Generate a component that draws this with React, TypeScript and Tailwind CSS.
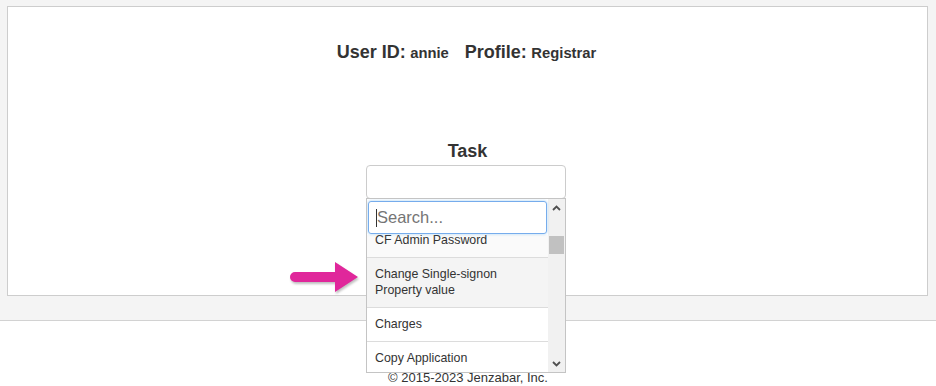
import React from "react";

const items = [
  { label: "CF Admin Password", className: "bg-[#fafafa]" },
  { label: "Change Single-signon Property value", className: "bg-[#f4f4f4]" },
  { label: "Charges", className: "bg-white" },
  { label: "Copy Application", className: "bg-white" },
];

const Chevron = ({ up }: { up?: boolean }) => (
  <svg width="9" height="6" viewBox="0 0 9 6" className="text-[#505050]">
    <path
      d={up ? "M1 5 L4.5 1.5 L8 5" : "M1 1 L4.5 4.5 L8 1"}
      fill="none"
      stroke="currentColor"
      strokeWidth="1.8"
    />
  </svg>
);

const PinkArrow = () => (
  <svg
    width="72"
    height="34"
    viewBox="0 0 72 34"
    className="absolute left-[288px] top-[260px] drop-shadow-[1px_2px_1px_rgba(0,0,0,0.25)]"
  >
    <path
      d="M7 12 H47 V2 L70 17 L47 32 V22 H7 A5 5 0 0 1 7 12 Z"
      fill="#e0279b"
    />
  </svg>
);

const TaskDropdown = () => (
  <div className="absolute left-[-1px] top-[32px] w-[200px] h-[175px] bg-white border border-[#c4c4c4] flex overflow-hidden">
    <div className="flex-1 flex flex-col min-w-0">
      <div className="px-[1px] pt-[2px] pb-[1px] bg-white relative z-10">
        <div className="h-[33px] rounded-[3px] border border-[#76acec] shadow-[0_0_3px_rgba(102,175,233,0.6)] flex items-center pl-[7px] text-[16.5px] text-[#757575]">
          <span className="w-[1px] h-[18px] bg-[#333]" />
          Search...
        </div>
      </div>
      <div className="flex-1 overflow-hidden">
        <div className="-mt-[11px]">
          {items.map((it) => (
            <div
              key={it.label}
              className={`px-[8px] pt-[8px] pb-[9px] leading-[16px] text-[12.4px] text-[#333] border-b border-[#dcdcdc] ${it.className}`}
            >
              {it.label === "Change Single-signon Property value" ? (
                <>
                  Change Single-signon
                  <br />
                  Property value
                </>
              ) : (
                it.label
              )}
            </div>
          ))}
        </div>
      </div>
    </div>
    <div className="w-[17px] bg-[#f1f1f1] flex flex-col items-center">
      <div className="h-[17px] flex items-center justify-center">
        <Chevron up />
      </div>
      <div className="w-[15px] h-[18px] bg-[#c1c1c1] mt-[20px]" />
      <div className="flex-1" />
      <div className="h-[17px] flex items-center justify-center">
        <Chevron />
      </div>
    </div>
  </div>
);

export default function App() {
  return (
    <div
      className="relative min-h-[386px] bg-white text-[#333]"
      style={{ fontFamily: '"Liberation Sans", Arial, sans-serif' }}
    >
      <div className="bg-[#f4f4f4] pt-[6px] pl-[7px] pr-[8px] pb-[24px] border-b border-[#d2d2d2]">
        <div className="h-[290px] bg-white border border-[#cdcdcd] flex flex-col items-center">
          <div className="mt-[35px] leading-[20px] font-bold flex items-baseline gap-[16px] mr-[2px]">
            <span>
              <span className="text-[18px]">User ID:</span>{" "}
              <span className="text-[14.8px]">annie</span>
            </span>
            <span>
              <span className="text-[18px]">Profile:</span>{" "}
              <span className="text-[14.8px]">Registrar</span>
            </span>
          </div>
          <div className="mt-[78px] leading-[20px] text-[18px] font-bold">Task</div>
          <div className="relative mt-[4px] w-[200px] h-[34px] rounded-[4px] border border-[#cccccc] bg-white ml-[-3px]">
            <TaskDropdown />
          </div>
        </div>
      </div>
      <div className="pt-[50px] text-center text-[13px] leading-[14px] text-[#333]">
        © 2015-2023 Jenzabar, Inc.
      </div>
      <PinkArrow />
    </div>
  );
}
